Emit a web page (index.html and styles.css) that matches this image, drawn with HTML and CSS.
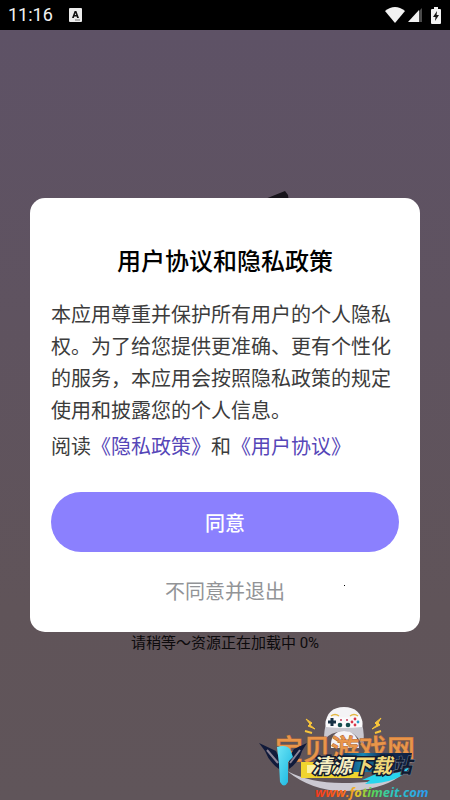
FILE: index.html
```html
<!DOCTYPE html>
<html lang="zh-CN">
	<head>
		<meta charset="utf-8">
		<meta name="viewport" content="width=device-width, initial-scale=1">
		<title>用户协议和隐私政策</title>
		<link rel="stylesheet" href="styles.css">
	</head>
	<body>
		<header class="statusBar">
			<span class="clock">11:16</span>
			<svg class="noticeIcon" width="13" height="14" viewBox="0 0 13 14">
				<rect width="13" height="14" rx="1" fill="#ececec"/>
				<path d="M3 10 L5.6 3 H7.4 L10 10 H8.1 L7.6 8.5 H5.3 L4.8 10 Z M5.8 7.1 H7.2 L6.5 5 Z" fill="#111" fill-rule="evenodd"/>
				<path d="M6 12 H11" stroke="#777"/>
			</svg>
			<svg class="wifiIcon" width="20" height="16" viewBox="0 0 20 16">
				<path d="M0 4 Q10 -4 20 4 L10 16 Z" fill="#f2f2f2"/>
			</svg>
			<svg class="signalIcon" width="14" height="14" viewBox="0 0 14 14">
				<path d="M10 4 L14 0 V14 H10 Z" fill="#4a4a4a"/>
				<path d="M0 14 L11 2 V14 Z" fill="#f2f2f2"/>
			</svg>
			<svg class="batteryIcon" width="10" height="17" viewBox="0 0 10 17">
				<path d="M3 0 H7 V2 H9 Q10 2 10 3 V16 Q10 17 9 17 H1 Q0 17 0 16 V3 Q0 2 1 2 H3 Z" fill="#f2f2f2"/>
				<path d="M6 4 L2 10 H4.5 L4 14 L8 8 H5.6 Z" fill="#111"/>
			</svg>
		</header>

		<main class="splash">
			<svg class="splashArt" width="25" height="20" viewBox="0 0 25 20">
				<path d="M0 8 L20 0 L23 4 L25 20 Z" fill="#17141b"/>
			</svg>
			<p class="loading">请稍等～资源正在加载中 0%</p>

			<div class="overlay">
				<section class="dialog" role="dialog" aria-labelledby="dialogTitle">
					<h1 class="dialogTitle" id="dialogTitle">用户协议和隐私政策</h1>
					<p class="dialogText">本应用尊重并保护所有用户的个人隐私权。为了给您提供更准确、更有个性化的服务，本应用会按照隐私政策的规定使用和披露您的个人信息。</p>
					<p class="dialogText dialogLinks">阅读<a href="#privacy">《隐私政策》</a>和<a href="#terms">《用户协议》</a></p>
					<button type="button" class="agreeButton">同意</button>
					<button type="button" class="declineButton">不同意并退出</button>
					<span class="speck"></span>
				</section>
			</div>

			<svg class="watermark" width="182" height="100" viewBox="258 700 182 100">
				<defs>
					<linearGradient id="urlColors" gradientUnits="userSpaceOnUse" x1="316" y1="0" x2="425" y2="0">
						<stop offset="0" stop-color="#f0381c"/>
						<stop offset=".25" stop-color="#ff6a1c"/>
						<stop offset=".38" stop-color="#e8c52a"/>
						<stop offset=".5" stop-color="#5fd84a"/>
						<stop offset=".7" stop-color="#2cc9c0"/>
						<stop offset="1" stop-color="#2d9df0"/>
					</linearGradient>
					<linearGradient id="panelColors" x1="0" y1="0" x2="1" y2="0">
						<stop offset="0" stop-color="#12284f"/>
						<stop offset=".35" stop-color="#1787b4"/>
						<stop offset=".6" stop-color="#14305a"/>
						<stop offset="1" stop-color="#10203f"/>
					</linearGradient>
					<linearGradient id="bladeColors" x1="0" y1="0" x2="1" y2="1">
						<stop offset="0" stop-color="#6fe6f6"/>
						<stop offset="1" stop-color="#14b4e0"/>
					</linearGradient>
				</defs>

				<!-- swoosh under the name -->
				<path d="M287 771 Q310 783 342 783 Q378 783 400 776 Q380 791 343 791 Q312 791 287 771 Z" fill="#cbc9d2"/>

				<!-- gamepad -->
				<path d="M326 726 C325 713 333 707 344 707 C355 707 363 713 362 726 Z" fill="#f4f3f6"/>
				<path d="M326 724 H362 Q365 734 363 748 Q358 732 344 731 Q330 732 324 740 Q324 730 326 724 Z" fill="#c9c8d0"/>
				<path d="M331 748 Q330 731 344 731 Q358 731 359 748 Z" fill="#f5f4f8"/>
				<path d="M329 716 Q344 719 359 716 Q364 720 362 727 Q344 729 326 727 Q324 720 329 716 Z" fill="#fbfafc"/>
				<path d="M331 716 Q335 713 339 716 M350 716 Q354 713 358 716" fill="none" stroke="#e4b843" stroke-width="1.5"/>
				<path d="M332 718 V726 M328 722 H336" stroke="#173044" stroke-width="3"/>
				<circle cx="355" cy="719" r="1.4" fill="#d83549"/>
				<circle cx="355" cy="725" r="1.4" fill="#d83549"/>
				<circle cx="352" cy="722" r="1.4" fill="#d83549"/>
				<circle cx="358" cy="722" r="1.4" fill="#2c9ec9"/>
				<circle cx="340" cy="725" r="2.3" fill="#164e50"/>
				<circle cx="348" cy="725" r="2.3" fill="#164e50"/>
				<path d="M340 720 H342 M346 720 H348" stroke="#c33756" stroke-width="1.5"/>
				<path d="M306 719 L312 723 L310 725 L315 729 L308 726 L310 724 Z M381 718 L375 723 L377 725 L372 729 L380 725 L378 723 Z" fill="#f7c43a" stroke="#f7c43a"/>
				<path d="M305 731 L312 733 M375 733 L381 731" stroke="#f7c43a" stroke-width="2"/>

				<text class="siteName" x="275" y="760">宝贝游戏网</text>

				<!-- wings and blade -->
				<path d="M259 743 L276 751 L279 757 V769 Q269 762 265 751 Z" fill="#101a3a"/>
				<path d="M307 743 L294 749 L289 757 V769 Q299 762 302 751 Z" fill="#101a3a"/>
				<path d="M267 750 L278 763 M300 750 L290 763" stroke="#8a8294" stroke-width="2"/>
				<path d="M277 747 Q286 744 290 749 L293 757 L288 762 V782 Q284 789 280 782 L279 764 Z" fill="url(#bladeColors)"/>

				<path d="M301 762 H369 L362 778 H301 Z" fill="#f0d42e"/>
				<path d="M307 765 H340 V773 H307 Z" fill="#fbf1a0"/>
				<path d="M344 753 H412 L408 772 H337 Z" fill="url(#panelColors)"/>
				<path d="M362 780 L376 774 Q398 776 410 766 Q402 783 365 784 L370 780 Z" fill="#28d5ed"/>
				<text class="stationName" x="312" y="773">清源<tspan class="gold">下载</tspan><tspan class="navy">站</tspan></text>

				<text class="siteUrl" x="315" y="797" fill="url(#urlColors)">www.fotimeit.com</text>
			</svg>
		</main>
	</body>
</html>
```
FILE: styles.css
```css
*
{
	box-sizing: border-box;
}
body
{
	margin: 0;
	min-height: 100vh;
	display: flex;
	flex-direction: column;
	font-family: "Noto Sans CJK SC", sans-serif;
	background-color: #60555a;
}
h1, p
{
	margin: 0;
}
svg
{
	display: block;
	flex: none;
}

.statusBar
{
	height: 30px;
	padding: 0 9px 0 8px;
	display: flex;
	align-items: center;
	background-color: #000;
	color: #f2f2f2;
}
.clock
{
	font-family: Roboto, sans-serif;
	font-size: 18px;
	font-weight: 400;
	line-height: 30px;
}
.noticeIcon
{
	margin-left: 16px;
}
.wifiIcon
{
	margin-left: auto;
}
.signalIcon
{
	margin-left: 3px;
}
.batteryIcon
{
	margin-left: 9px;
}

.splash
{
	position: relative;
	flex: 1;
	display: flex;
	flex-direction: column;
	align-items: center;
	justify-content: space-between;
	padding: 161px 16px 146px;
	background-image: linear-gradient(#5e5266, #605459 75%, #60555a);
}
.splashArt
{
	margin-left: 105px;
}
.loading
{
	color: #0c0a0c;
	font-family: Roboto, "Noto Sans CJK SC", sans-serif;
	font-size: 15px;
	line-height: 22px;
}

.overlay
{
	position: absolute;
	inset: 0;
	display: flex;
	align-items: center;
	justify-content: center;
	padding: 0 30px;
}
.dialog
{
	position: relative;
	width: 100%;
	max-width: 480px;
	padding: 44px 21px 24px;
	border-radius: 15px;
	background-color: #fff;
	display: flex;
	flex-direction: column;
}
.dialogTitle
{
	color: #000;
	font-size: 24px;
	font-weight: 500;
	line-height: 36px;
	text-align: center;
}
.dialogText
{
	margin-top: 20px;
	color: #3c3c3c;
	font-size: 20px;
	line-height: 32px;
}
.dialogLinks
{
	margin-top: 4px;
}
.dialogLinks a
{
	color: #5646b8;
	text-decoration: none;
}
.agreeButton
{
	height: 60px;
	margin-top: 30px;
	border: none;
	border-radius: 30px;
	background-color: #8b80fe;
	color: #fff;
	font-family: inherit;
	font-size: 20px;
	font-weight: 500;
}
.declineButton
{
	height: 36px;
	margin-top: 20px;
	border: none;
	background-color: transparent;
	color: #929497;
	font-family: inherit;
	font-size: 20px;
}
.speck
{
	position: absolute;
	right: 75px;
	bottom: 46px;
	width: 1px;
	height: 1px;
	background-color: #000;
}

.watermark
{
	position: absolute;
	right: 10px;
	bottom: 0;
}
.siteName
{
	font-size: 28px;
	font-weight: 500;
	fill: #e8954a;
	stroke: #b06a3a;
	stroke-width: 1px;
	paint-order: stroke;
}
.stationName
{
	font-size: 20px;
	font-weight: 700;
	font-style: italic;
	fill: #f6efc0;
	stroke: #101a30;
	stroke-width: 3px;
	paint-order: stroke;
}
.stationName .gold
{
	fill: #f0d878;
}
.stationName .navy
{
	fill: #101a30;
	stroke: #6d7a92;
	stroke-width: 1px;
}
.siteUrl
{
	font-family: "Open Sans", sans-serif;
	font-size: 13px;
	font-weight: 700;
	font-style: italic;
}
```
